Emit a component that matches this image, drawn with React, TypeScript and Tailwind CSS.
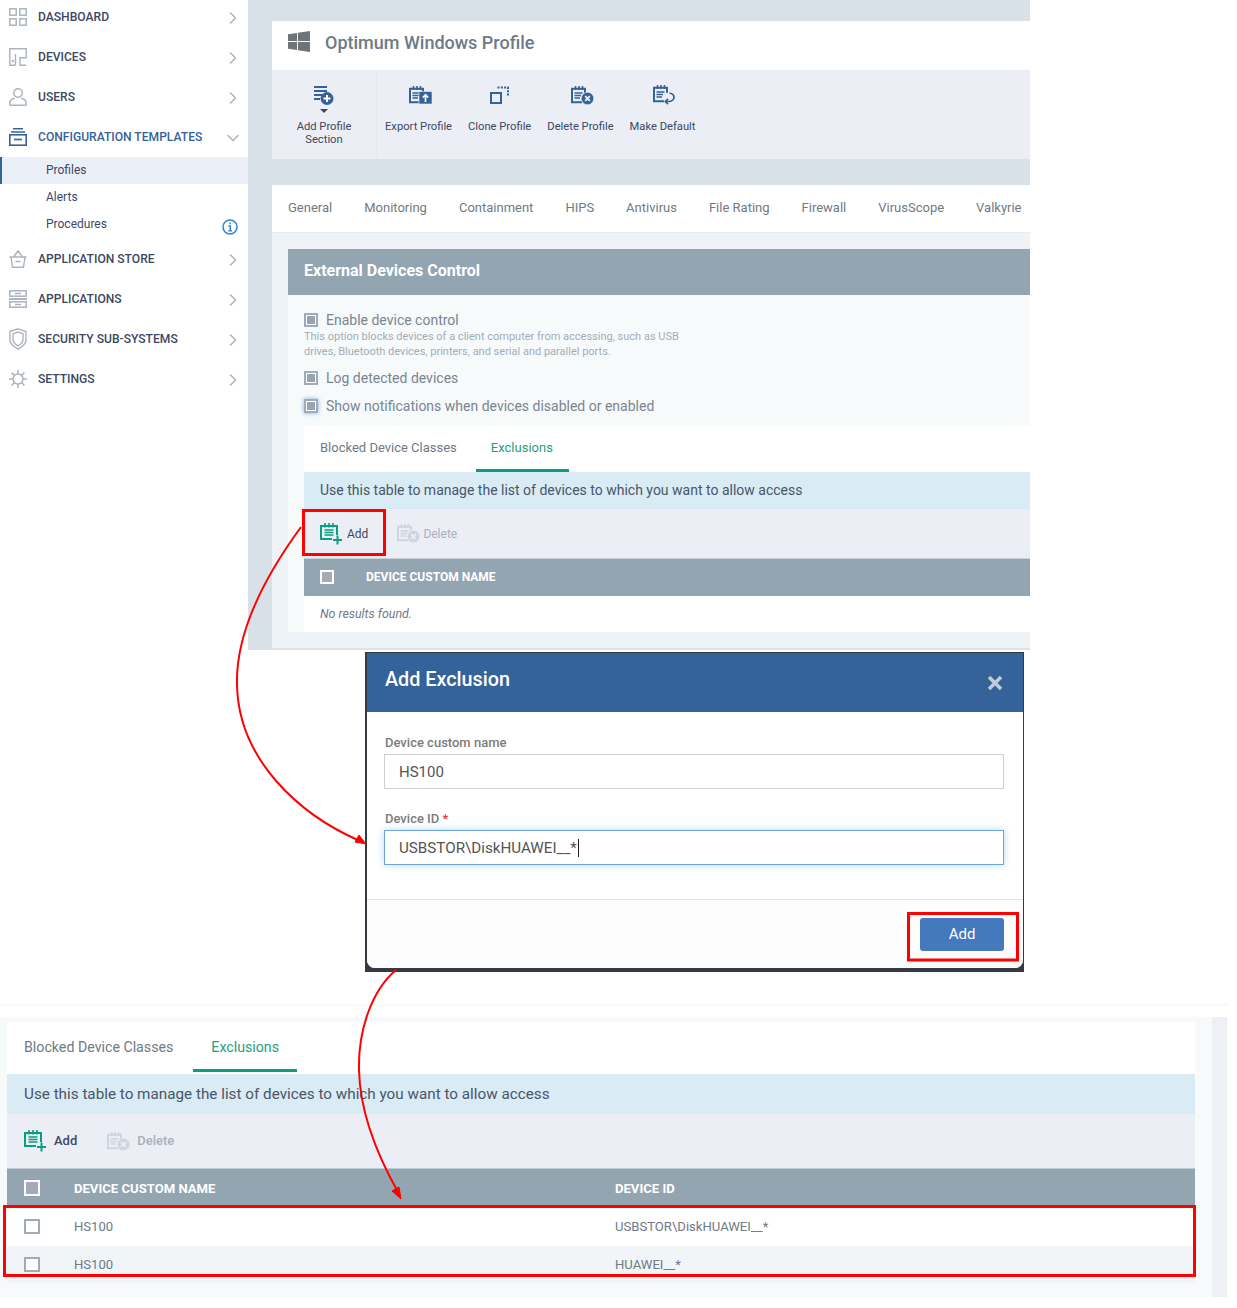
import React from 'react'
import { ChevronRight, ChevronDown } from 'lucide-react'

const BLUE = '#36629a'

function Dashboard() {
    return <svg width="18" height="18" viewBox="0 0 18 18" fill="none" stroke="#aab4bf" strokeWidth="1.5"><rect x="0.8" y="0.8" width="6.4" height="6.4" /><rect x="10.8" y="0.8" width="6.4" height="6.4" /><rect x="0.8" y="10.8" width="6.4" height="6.4" /><rect x="10.8" y="10.8" width="6.4" height="6.4" /></svg>
}
function Devices() {
    return <svg width="18" height="18" viewBox="0 0 18 18" fill="none" stroke="#aab4bf" strokeWidth="1.4"><path d="M6.500 17.200H0.800V0.800h16.400v9H11v7.400h6" /><path d="M6.500 6v11.200" /><circle cx="3.800" cy="13" r="0.500" /></svg>
}
function User() {
    return <svg width="18" height="18" viewBox="0 0 18 18" fill="none" stroke="#aab4bf" strokeWidth="1.5"><circle cx="9" cy="5" r="4.200" /><path d="M0.800 17.200v-2.200c0-2.800 3-4.400 5-4.800M17.200 17.200v-2.200c0-2.800-3-4.400-5-4.800M0.800 17.200h16.400" /></svg>
}
function Templates() {
    return <svg width="18" height="18" viewBox="0 0 18 18" fill="none" stroke={BLUE} strokeWidth="1.600"><path d="M4 0.800h10M2 4h14" /><rect x="0.800" y="6.800" width="16.400" height="10.400" /><path d="M5 11.500h8" /></svg>
}
function Basket() {
    return <svg width="18" height="18" viewBox="0 0 18 18" fill="none" stroke="#aab4bf" strokeWidth="1.400"><path d="M0.500 7h17M2 7l1.500 10.300h11L16 7M4.500 7L9 0.800 13.500 7M6.500 11.500h5" /></svg>
}
function Apps() {
    return <svg width="18" height="18" viewBox="0 0 18 18" fill="none" stroke="#aab4bf" strokeWidth="1.500"><rect x="0.800" y="0.800" width="16.400" height="5.400" /><rect x="0.800" y="11.800" width="16.400" height="5.400" /><path d="M0 9h18" strokeWidth="2" /><path d="M6 3.500h6M6 14.500h6" /></svg>
}
function Shield() {
    return <svg width="18" height="22" viewBox="0 0 18 22" fill="none" stroke="#aab4bf" strokeWidth="1.400"><path d="M9 0.800l8 2.700v8.500c0 4-4 7-8 9.200-4-2.200-8-5.200-8-9.200V3.500z" /><path d="M9 4l5 1.700v6c0 2.800-2.500 4.600-5 6.200-2.500-1.600-5-3.400-5-6.200v-6z" /></svg>
}
function Gear() {
    return <svg width="18" height="18" viewBox="0 0 18 18" fill="none" stroke="#aab4bf" strokeWidth="1.500"><circle cx="9" cy="9" r="5" /><path d="M9 0v4M9 14v4M0 9h4M14 9h4M2.600 2.600l2.800 2.800M12.600 12.600l2.800 2.800M15.400 2.600l-2.800 2.800M5.400 12.600l-2.800 2.800" /></svg>
}

function Clipboard({ color }: { color: string }) {
    return <g fill="none" stroke={color}>
        <path d="M11 16.200H1V2.800h13v5" strokeWidth="2" />
        <path d="M4.500 0v4M8 0v4M11.500 0v4" strokeWidth="1.600" />
        <path d="M3.500 7h8M3.500 9.500h6.500M3.500 12h5.500" strokeWidth="1.300" />
    </g>
}
function AddSection() {
    return <svg width="20" height="19" viewBox="0 0 20 19"><g stroke={BLUE} strokeWidth="1.800"><path d="M0 1h13M0 5h13M0 9h8M0 13h6" /></g><circle cx="13" cy="12.500" r="6.500" fill={BLUE} /><path d="M13 9v7M9.500 12.500h7" stroke="#fff" strokeWidth="2" /></svg>
}
function ExportIcon() {
    return <svg width="23" height="18" viewBox="0 0 23 18" className="ml-[3px]"><Clipboard color={BLUE} /><rect x="10" y="5.500" width="13" height="12.500" fill={BLUE} stroke="#ebeff5" strokeWidth="0.600" /><path d="M16.500 16V9M13.800 11.500l2.700-2.700 2.700 2.700" fill="none" stroke="#fff" strokeWidth="1.700" /></svg>
}
function CloneIcon() {
    return <svg width="19" height="18" viewBox="0 0 19 18" fill="none" stroke={BLUE}><rect x="1" y="7" width="10" height="10" strokeWidth="2" /><path d="M7.500 1.500h10.500v9" strokeWidth="2" strokeDasharray="2 1.300" /></svg>
}
function DeleteIcon({ color = BLUE, bg = '#ebeff5', className }: { color?: string, bg?: string, className?: string }) {
    return <svg width="23" height="19" viewBox="0 0 23 19" className={className}><Clipboard color={color} /><circle cx="16.500" cy="12.500" r="6.300" fill={color} stroke={bg} strokeWidth="0.700" /><path d="M14.200 10.200l4.600 4.600M18.800 10.200l-4.600 4.600" stroke={bg} strokeWidth="1.900" /></svg>
}
function DefaultIcon() {
    return <svg width="22" height="21" viewBox="0 0 22 21" className="ml-[3px]"><Clipboard color={BLUE} /><path d="M16.500 8c3.200 0.500 4.500 2.300 4.500 4.300s-2 4.200-5.500 4.200h-3M15 13.800l-2.700 2.700 2.700 2.700" fill="none" stroke={BLUE} strokeWidth="1.700" /></svg>
}
function AddIcon() {
    return <svg width="23" height="22" viewBox="0 0 23 22" fill="none" stroke="#0a9d80"><path d="M12 16H1V3h16v9" strokeWidth="2" /><path d="M5 0v4.500M9 0v4.500M13 0v4.500" strokeWidth="1.600" /><path d="M4.500 7h9M4.500 9.500h9M4.500 12h9" strokeWidth="1.300" /><path d="M17.500 12.500v9M13 17h9" strokeWidth="2" /></svg>
}
function Windows() {
    return <svg width="22" height="21" viewBox="0 0 22 21" fill="#6f7478" className="mb-[3px]"><path d="M0 3.300L9 2v8H0zM10 1.800L22 0v10H10zM0 11h9v8L0 17.700zM10 11h12v10l-12-1.800z" /></svg>
}

function NavItem({ icon, label, open }: { icon: React.ReactNode, label: string, open?: boolean }) {
    return (
        <div className="flex items-center h-[40px] pl-[9px] pr-[5px]">
            <div className="w-[18px] h-[20px] flex items-center justify-center mr-[11px]">{icon}</div>
            <span className={`flex-1 text-[12.1px] font-medium ${open ? 'text-[#36629a]' : 'text-[#3d4763]'}`}>{label}</span>
            {open
                ? <ChevronDown size={20} strokeWidth={1.8} color="#aab4bf" className="mt-[2px]" />
                : <ChevronRight size={20} strokeWidth={1.8} color="#aab4bf" className="mt-[1px]" />}
        </div>
    )
}

function SubItem({ label, active, info }: { label: string, active?: boolean, info?: boolean }) {
    return (
        <div className={`flex items-center h-[27px] pb-[2px] pr-[10px] text-[12px] text-[#3d4763] ${active ? 'bg-[#ebeff7] border-l-2 border-[#36629a] pl-[44px]' : 'pl-[46px]'}`}>
            <span className="flex-1">{label}</span>
            {info && <svg width="16" height="16" viewBox="0 0 16 16" className="mt-[6px]"><circle cx="8" cy="8" r="7" fill="none" stroke="#2e86cf" strokeWidth="1.500" /><path d="M8 3.500v1.800M6.500 7h1.800v4.500M6.300 11.700h3.600" fill="none" stroke="#2e86cf" strokeWidth="1.500" /></svg>}
        </div>
    )
}

function Sidebar() {
    return (
        <aside className="w-[248px] shrink-0 overflow-hidden">
            <div className="-mt-[3px]">
                <NavItem icon={<Dashboard />} label="DASHBOARD" />
                <NavItem icon={<Devices />} label="DEVICES" />
                <NavItem icon={<User />} label="USERS" />
                <NavItem icon={<Templates />} label="CONFIGURATION TEMPLATES" open />
                <SubItem label="Profiles" active />
                <SubItem label="Alerts" />
                <SubItem label="Procedures" info />
                <div className="h-px" />
                <NavItem icon={<Basket />} label="APPLICATION STORE" />
                <NavItem icon={<Apps />} label="APPLICATIONS" />
                <NavItem icon={<Shield />} label="SECURITY SUB-SYSTEMS" />
                <NavItem icon={<Gear />} label="SETTINGS" />
            </div>
        </aside>
    )
}

function ToolButton({ icon, children }: { icon: React.ReactNode, children: React.ReactNode }) {
    return (
        <div className="flex flex-col items-center px-2 pt-[14px] text-[11.2px] leading-[13px] text-[#3d4763] text-center whitespace-nowrap">
            <div className="h-[22px] flex items-center justify-center">{icon}</div>
            <div className="mt-[14px]">{children}</div>
        </div>
    )
}

function Check({ glow }: { glow?: boolean }) {
    return (
        <div className={`w-[14px] h-[14px] shrink-0 border-2 border-[#a0abb9] bg-white flex items-center justify-center ${glow ? 'shadow-[0_0_4px_#7fa6d6]' : ''}`}>
            <div className="w-[8px] h-[8px] bg-[#98a4b3]" />
        </div>
    )
}

function HeaderCheck({ size = 'w-[14px] h-[14px]' }: { size?: string }) {
    return <div className={`${size} border-2 border-white bg-[#a5aab9]`} />
}

function RowCheck() {
    return <div className="w-[16px] h-[15px] border-2 border-[#a0abb9] bg-white" />
}

function ProfilePanel() {
    return (
        <main className="w-[782px] h-[650px] bg-[#d8e0e8] pt-[21px] pl-[24px] overflow-hidden">
            <div className="h-[49px] bg-white flex items-center pl-[16px] pb-[6px]">
                <Windows />
                <h1 className="ml-[15px] text-[18px] font-medium text-[#6d7a87]">Optimum Windows Profile</h1>
            </div>
            <div className="h-[89px] bg-[#ebeff5] flex">
                <div className="w-[105px] border-r border-[#e6eaf0] flex flex-col items-center pt-[14px] text-[11.2px] leading-[13px] text-[#3d4763] text-center">
                    <div className="h-[22px] flex items-center"><AddSection /></div>
                    <div className="w-0 h-0 border-x-[4px] border-x-transparent border-t-[4px] border-t-[#3d4763] mt-[3px]" />
                    <div className="mt-[7px]">Add Profile<br />Section</div>
                </div>
                <div className="flex">
                    <ToolButton icon={<ExportIcon />}>Export Profile</ToolButton>
                    <ToolButton icon={<CloneIcon />}>Clone Profile</ToolButton>
                    <ToolButton icon={<DeleteIcon className="ml-[4px]" />}>Delete Profile</ToolButton>
                    <ToolButton icon={<DefaultIcon />}>Make Default</ToolButton>
                </div>
            </div>
            <div className="mt-[26px] h-[48px] bg-white flex items-center gap-8 pl-[16px] pb-[2px] text-[13px] text-[#6f7a85] whitespace-nowrap border-b border-[#e8ecf0]">
                {['General', 'Monitoring', 'Containment', 'HIPS', 'Antivirus', 'File Rating', 'Firewall', 'VirusScope', 'Valkyrie'].map(t => <span key={t}>{t}</span>)}
            </div>
            <div className="h-[416px] bg-[#eef3f7] pl-[16px] pt-[16px] border-b border-[#dde4ea]">
                <div className="h-[46px] bg-[#94a5b2] flex items-center pl-[16px] pb-[2px] text-[16px] font-bold text-white">External Devices Control</div>
                <div className="h-[337px] bg-[#f6fafb] pl-[16px] pt-[16px]">
                    <div className="flex items-center gap-2 text-[14px] leading-[18px] text-[#7a8590]"><Check />Enable device control</div>
                    <p className="text-[11px] leading-[15px] text-[#a3adb8] w-[390px]">This option blocks devices of a client computer from accessing, such as USB drives, Bluetooth devices, printers, and serial and parallel ports.</p>
                    <div className="mt-[10px] flex items-center gap-2 text-[14px] leading-[18px] text-[#7a8590]"><Check />Log detected devices</div>
                    <div className="mt-[10px] flex items-center gap-2 text-[14px] leading-[18px] text-[#7a8590]"><Check glow />Show notifications when devices disabled or enabled</div>
                    <div className="mt-[10px] h-[47px] bg-white flex pl-[16px] text-[13px] text-[#6f7a85]">
                        <span className="pt-[13px]">Blocked Device Classes</span>
                        <span className="ml-[19px] pl-[15px] pr-[16px] pt-[13px] h-[47px] border-b-[3px] border-[#0a9d80] text-[#1f9e82]">Exclusions</span>
                    </div>
                    <div className="h-[37px] bg-[#d9ecf5] flex items-center pl-[16px] text-[14px] text-[#4a5568]">Use this table to manage the list of devices to which you want to allow access</div>
                    <div className="h-[50px] bg-[#ebeff5] flex items-center pl-[16px] text-[12px] border-b border-[#c9d1d9]">
                        <AddIcon />
                        <span className="ml-[4px] text-[#3d4763]">Add</span>
                        <span className="ml-[29px] flex"><DeleteIcon color="#cdd5df" /></span>
                        <span className="ml-[3px] text-[#a9b0bc]">Delete</span>
                    </div>
                    <div className="h-[37px] bg-[#94a5b2] flex items-center pl-[16px] pb-px text-[12px] font-bold text-white">
                        <HeaderCheck />
                        <span className="ml-[32px]">DEVICE CUSTOM NAME</span>
                    </div>
                    <div className="h-[36px] bg-white flex items-center pl-[16px] text-[12.4px] italic text-[#6f7a85]">No results found.</div>
                </div>
            </div>
        </main>
    )
}

function ExclusionDialog() {
    return (
        <div className="ml-[365px] mt-[2px] w-[659px] h-[320px] bg-[#333a42] pl-[2px] pr-[1px] pt-px pb-[4px]">
            <div className="h-full bg-white rounded-b-[8px] overflow-hidden flex flex-col">
                <div className="h-[59px] bg-[#36629a] flex items-center justify-between pl-[18px] pr-[20px] pb-[5px] shrink-0">
                    <h2 className="text-[19.8px] font-medium text-white">Add Exclusion</h2>
                    <svg width="16" height="16" viewBox="0 0 16 16" className="mt-[5px]"><path d="M2 2l12 12M14 2L2 14" stroke="#c3ccd6" strokeWidth="3.500" /></svg>
                </div>
                <div className="h-[187px] pl-[17px] pr-[19px] pt-[23px] shrink-0">
                    <label className="block pl-px text-[13px] leading-[16px] font-medium text-[#7c7c7c]">Device custom name</label>
                    <div className="mt-[3px] h-[35px] pt-px border border-[#cfcfcf] flex items-center pl-[14px] text-[15px] text-[#555]">HS100</div>
                    <label className="block mt-[22px] pl-px text-[13px] leading-[16px] font-medium text-[#7c7c7c]">Device ID <span className="text-[#e53935]">*</span></label>
                    <div className="mt-[3px] h-[35px] pt-px border border-[#6aa5dc] shadow-[0_0_8px_#bcd8f2] flex items-center pl-[14px] text-[15.2px] text-[#555]">USBSTOR\DiskHUAWEI__*<span className="w-px h-[18px] bg-[#222] ml-[1px]" /></div>
                </div>
                <div className="flex-1 bg-[#fcfcfc] border-t border-[#dfe4ea] flex items-start justify-end pt-[18px] pr-[19px]">
                    <button type="button" className="w-[84px] h-[33px] rounded-[3px] bg-[#4479bd] text-white text-[15px]">Add</button>
                </div>
            </div>
        </div>
    )
}

function ResultTable() {
    return (
        <section className="mt-[32px] w-[1228px] h-[293px]">
            <div className="h-[2px] bg-[#f6fafb]" />
            <div className="h-[11px]" />
            <div className="h-[280px] flex">
                <div className="w-[1212px] bg-[#f6fafb] pl-[7px] pt-[5px] pr-[17px]">
                    <div className="h-[52px] bg-white flex pl-[17px] text-[14.2px] text-[#6f7a85]">
                        <span className="pt-[15px]">Blocked Device Classes</span>
                        <span className="ml-[20px] px-[18px] pt-[15px] h-[50px] border-b-[3px] border-[#0a9d80] text-[#1f9e82]">Exclusions</span>
                    </div>
                    <div className="h-[40px] bg-[#d9ecf5] flex items-center pl-[17px] text-[15.25px] text-[#4a5568]">Use this table to manage the list of devices to which you want to allow access</div>
                    <div className="h-[55px] bg-[#ebeff5] flex items-center pl-[17px] text-[13px] font-medium border-b border-[#c0c9d1]">
                        <AddIcon />
                        <span className="ml-[7px] text-[#3d4763]">Add</span>
                        <span className="ml-[30px] flex"><DeleteIcon color="#cdd5df" /></span>
                        <span className="ml-[7px] text-[#a9b0bc]">Delete</span>
                    </div>
                    <div className="h-[36px] bg-[#94a5b2] flex items-center pt-[3px] text-[13.1px] font-bold text-white">
                        <div className="w-[67px] pl-[17px] -mt-[2px]"><HeaderCheck size="w-[16px] h-[16px]" /></div>
                        <span className="w-[541px]">DEVICE CUSTOM NAME</span>
                        <span>DEVICE ID</span>
                    </div>
                    <div className="h-[41px] bg-white flex items-center pt-[2px] text-[13.1px] text-[#6f7a85]">
                        <div className="w-[67px] pl-[17px]"><RowCheck /></div>
                        <span className="w-[541px]">HS100</span>
                        <span>USBSTOR\DiskHUAWEI__*</span>
                    </div>
                    <div className="h-[37px] bg-[#f1f5f8] flex items-center text-[13.1px] text-[#6f7a85]">
                        <div className="w-[67px] pl-[17px]"><RowCheck /></div>
                        <span className="w-[541px]">HS100</span>
                        <span>HUAWEI__*</span>
                    </div>
                </div>
                <div className="w-[15px] bg-[#edf1f6]" />
            </div>
        </section>
    )
}

function Annotations() {
    return (
        <svg width="1237" height="1308" className="absolute top-0 left-0 pointer-events-none" fill="none" stroke="#ff0000">
            <rect x="303.500" y="510.500" width="81" height="44" strokeWidth="3" />
            <rect x="908.500" y="913.500" width="109" height="46.500" strokeWidth="3" />
            <rect x="4.500" y="1206.500" width="1190" height="69" strokeWidth="3" />
            <path d="M301 527C255 590 236 640 237 684C238 760 300 815 360 841" strokeWidth="2" />
            <path d="M366 844L355 842L359 835Z" fill="#ff0000" strokeWidth="1" />
            <path d="M396 970C372 990 358 1030 359 1070C360 1115 380 1160 398 1192" strokeWidth="2" />
            <path d="M401 1199L392 1191L399 1187Z" fill="#ff0000" strokeWidth="1" />
        </svg>
    )
}

export default function App() {
    return (
        <div className="relative w-[1237px] h-[1308px] bg-white font-['Roboto',sans-serif] overflow-hidden">
            <div className="flex">
                <Sidebar />
                <ProfilePanel />
            </div>
            <ExclusionDialog />
            <ResultTable />
            <Annotations />
        </div>
    )
}
